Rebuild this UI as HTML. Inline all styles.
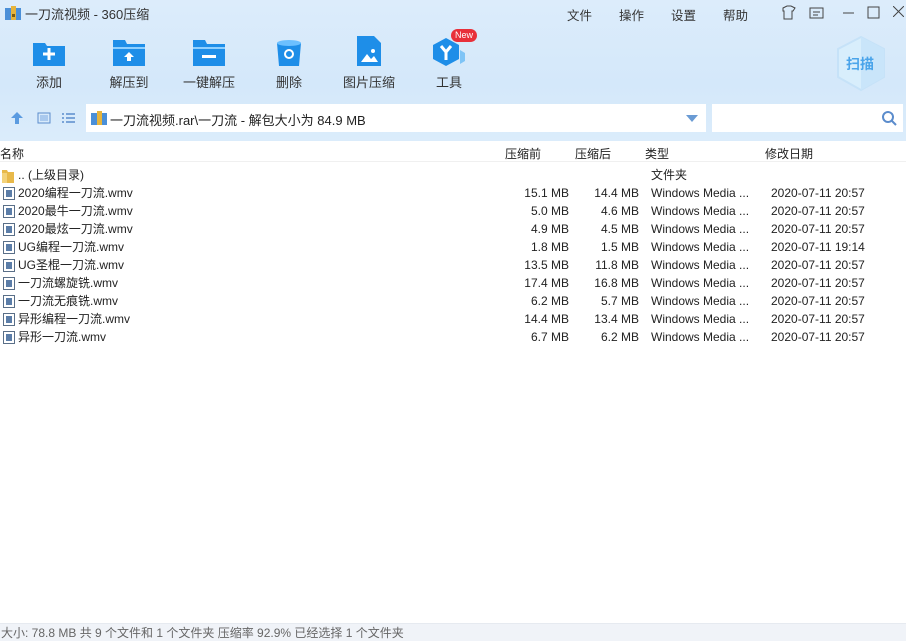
<!DOCTYPE html><html><head><meta charset="utf-8"><style>
*{margin:0;padding:0;box-sizing:border-box}
body{width:906px;height:641px;overflow:hidden;position:relative;font:12px "Liberation Sans","Noto Sans CJK SC",sans-serif;color:#222;background:#fff}
.top{position:absolute;left:0;top:0;width:906px;height:141px;background:linear-gradient(180deg,#dcecfb 0%,#d4e8fa 60%,#dbecfb 100%)}
.abs{position:absolute}
.tb{position:absolute;top:40px;width:70px;text-align:center;font-size:13px;color:#333}
.tb svg{display:block;margin:0 auto 6px}
.menu{position:absolute;top:5px;font-size:12.5px;color:#333}
.row{position:absolute;left:0;width:906px;height:18px;line-height:18px;font-size:12px}
.row span{position:absolute}
.ic{left:3px;top:3px;width:12px;height:13px;border:1px solid #5a6f88;background:#fff}
.ic:after{content:"";position:absolute;left:2px;top:2px;width:6px;height:7px;background:#5b7da8}
</style></head><body>
<div class="top"></div>
<svg class="abs" style="left:5px;top:6px" width="16" height="14"><rect x="0" y="2" width="16" height="12" fill="#4a8fd8"/><rect x="6" y="0" width="5" height="14" fill="#e6b43c"/><rect x="7" y="8" width="3" height="3" fill="#7a5a10"/></svg>
<div class="abs" style="left:25px;top:4px;font-size:13px;color:#333">一刀流视频 - 360压缩</div>
<div class="menu" style="left:567px">文件</div><div class="menu" style="left:619px">操作</div><div class="menu" style="left:671px">设置</div><div class="menu" style="left:723px">帮助</div>
<svg class="abs" style="left:780px;top:5px" width="100" height="16" fill="none" stroke="#444" stroke-width="1"><path d="M3 3l4-2h4l4 2-2 3h-1v8H4V6H3z"/><rect x="30" y="3" width="13" height="10"/><path d="M33 7h7M33 10h5"/><path d="M63 8h11"/><rect x="88" y="2" width="11" height="11"/></svg>
<svg class="abs" style="left:893px;top:6px" width="11" height="11" stroke="#444"><path d="M0 0L11 11M11 0L0 11"/></svg>

<div class="tb" style="left:14px"><svg width="32" height="26"><path d="M0 3h12l2 3h18v20H0z" fill="#1e8ee8"/><path d="M10 14h12M16 8v12" stroke="#fff" stroke-width="3"/></svg>添加</div>
<div class="tb" style="left:94px"><svg width="32" height="26"><path d="M0 0h12l2 4h18v22H0z" fill="#1e8ee8"/><rect x="0" y="7" width="32" height="2" fill="#8fd0ff"/><path d="M16 12l-5 5h3v4h4v-4h3z" fill="#fff"/></svg>解压到</div>
<div class="tb" style="left:174px"><svg width="32" height="26"><path d="M0 0h12l2 4h18v22H0z" fill="#1e8ee8"/><rect x="0" y="7" width="32" height="2" fill="#8fd0ff"/><rect x="9" y="15" width="14" height="3" fill="#fff"/></svg>一键解压</div>
<div class="tb" style="left:254px"><svg width="28" height="26"><path d="M2 3h24l-2 23H4z" fill="#1e8ee8"/><ellipse cx="14" cy="3" rx="12" ry="3" fill="#6cc0ff"/><circle cx="14" cy="14" r="4" fill="none" stroke="#fff" stroke-width="2"/></svg>删除</div>
<div class="tb" style="left:334px"><svg width="28" height="30" style="margin-top:-4px"><path d="M2 0h17l7 7v23H2z" fill="#1e8ee8"/><path d="M6 26l6-8 4 5 3-3 4 6z" fill="#fff"/><circle cx="18" cy="15" r="2" fill="#fff"/></svg>图片压缩</div>
<div class="tb" style="left:414px"><svg width="36" height="28" style="margin-top:-2px"><path d="M15 0l13 7v14l-13 7-13-7V7z" fill="#1e8ee8"/><path d="M29 12l5 3v8l-5 3z" fill="#7ec4f6"/><path d="M10 8l5 6 5-6M15 14v8" stroke="#fff" stroke-width="3" fill="none"/></svg>工具</div>
<div class="abs" style="left:451px;top:29px;width:26px;height:13px;border-radius:7px;background:#e8303a;color:#fff;font-size:9px;line-height:13px;text-align:center">New</div>
<svg class="abs" style="left:836px;top:36px" width="50" height="56"><path d="M25 1l23 12v28L25 54 2 41V13z" fill="#d8eefc" stroke="#c6e2f8" stroke-width="2"/><path d="M25 1l23 12v28L25 54z" fill="#c9e5fa"/></svg>
<div class="abs" style="left:846px;top:54px;font-size:14px;font-weight:bold;color:#4aa4ea">扫描</div>

<svg class="abs" style="left:10px;top:111px" width="70" height="14"><path d="M7 1l6 6H9v6H5V7H1z" fill="#5b9be0"/><rect x="28" y="2" width="12" height="10" fill="none" stroke="#5b8ccc"/><rect x="30" y="4" width="8" height="6" fill="#a9c9ee"/><path d="M52 3h2M52 7h2M52 11h2M56 3h9M56 7h9M56 11h9" stroke="#5b8ccc" stroke-width="1.5"/></svg>
<div class="abs" style="left:86px;top:104px;width:620px;height:28px;background:#fff"></div>
<svg class="abs" style="left:91px;top:111px" width="16" height="14"><rect x="0" y="2" width="16" height="12" fill="#4a8fd8"/><rect x="6" y="0" width="5" height="14" fill="#e6b43c"/></svg>
<div class="abs" style="left:110px;top:110px;font-size:13px;color:#222">一刀流视频.rar\一刀流 - 解包大小为 84.9 MB</div>
<svg class="abs" style="left:686px;top:115px" width="12" height="7"><path d="M0 0h12L6 7z" fill="#6a9bd4"/></svg>
<div class="abs" style="left:712px;top:104px;width:191px;height:28px;background:#fff"></div>
<svg class="abs" style="left:881px;top:110px" width="16" height="16" fill="none" stroke="#5b8ccc" stroke-width="2"><circle cx="7" cy="7" r="5"/><path d="M11 11l4 4"/></svg>

<div class="abs" style="left:0;top:141px;width:906px;height:21px;background:#fff;border-bottom:1px solid #f0f0f0"></div>
<div class="abs" style="left:0;top:145px">名称</div>
<div class="abs" style="left:505px;top:145px">压缩前</div>
<div class="abs" style="left:575px;top:145px">压缩后</div>
<div class="abs" style="left:645px;top:145px">类型</div>
<div class="abs" style="left:765px;top:145px">修改日期</div>

<div class="row" style="top:166px"><svg style="position:absolute;left:2px;top:2px" width="12" height="15"><path d="M0 2h5l1 2h6v11H0z" fill="#e8b94a"/><rect x="0" y="5" width="5" height="10" fill="#f3d27a"/></svg><span style="left:18px">.. (上级目录)</span><span style="left:651px">文件夹</span></div>

<div class="row" style="top:184px"><span class="ic"></span><span style="left:18px">2020编程一刀流.wmv</span><span style="right:337px">15.1 MB</span><span style="right:267px">14.4 MB</span><span style="left:651px">Windows Media ...</span><span style="left:771px">2020-07-11 20:57</span></div>
<div class="row" style="top:202px"><span class="ic"></span><span style="left:18px">2020最牛一刀流.wmv</span><span style="right:337px">5.0 MB</span><span style="right:267px">4.6 MB</span><span style="left:651px">Windows Media ...</span><span style="left:771px">2020-07-11 20:57</span></div>
<div class="row" style="top:220px"><span class="ic"></span><span style="left:18px">2020最炫一刀流.wmv</span><span style="right:337px">4.9 MB</span><span style="right:267px">4.5 MB</span><span style="left:651px">Windows Media ...</span><span style="left:771px">2020-07-11 20:57</span></div>
<div class="row" style="top:238px"><span class="ic"></span><span style="left:18px">UG编程一刀流.wmv</span><span style="right:337px">1.8 MB</span><span style="right:267px">1.5 MB</span><span style="left:651px">Windows Media ...</span><span style="left:771px">2020-07-11 19:14</span></div>
<div class="row" style="top:256px"><span class="ic"></span><span style="left:18px">UG圣棍一刀流.wmv</span><span style="right:337px">13.5 MB</span><span style="right:267px">11.8 MB</span><span style="left:651px">Windows Media ...</span><span style="left:771px">2020-07-11 20:57</span></div>
<div class="row" style="top:274px"><span class="ic"></span><span style="left:18px">一刀流螺旋铣.wmv</span><span style="right:337px">17.4 MB</span><span style="right:267px">16.8 MB</span><span style="left:651px">Windows Media ...</span><span style="left:771px">2020-07-11 20:57</span></div>
<div class="row" style="top:292px"><span class="ic"></span><span style="left:18px">一刀流无痕铣.wmv</span><span style="right:337px">6.2 MB</span><span style="right:267px">5.7 MB</span><span style="left:651px">Windows Media ...</span><span style="left:771px">2020-07-11 20:57</span></div>
<div class="row" style="top:310px"><span class="ic"></span><span style="left:18px">异形编程一刀流.wmv</span><span style="right:337px">14.4 MB</span><span style="right:267px">13.4 MB</span><span style="left:651px">Windows Media ...</span><span style="left:771px">2020-07-11 20:57</span></div>
<div class="row" style="top:328px"><span class="ic"></span><span style="left:18px">异形一刀流.wmv</span><span style="right:337px">6.7 MB</span><span style="right:267px">6.2 MB</span><span style="left:651px">Windows Media ...</span><span style="left:771px">2020-07-11 20:57</span></div>

<div class="abs" style="left:0;top:623px;width:906px;height:18px;background:#f0f3f8;border-top:1px solid #e6eaf0;color:#666;line-height:18px;padding-left:1px">大小: 78.8 MB 共 9 个文件和 1 个文件夹 压缩率 92.9% 已经选择 1 个文件夹</div>
</body></html>
